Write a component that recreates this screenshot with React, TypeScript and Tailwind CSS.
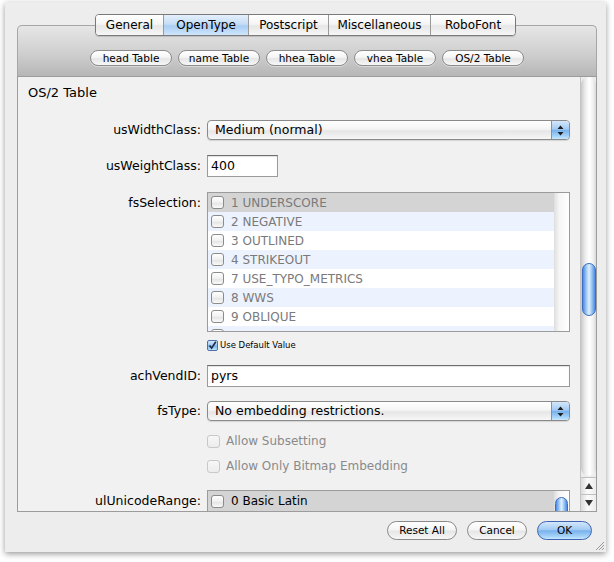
import React from "react";

const aquaBlue =
  "bg-[linear-gradient(to_bottom,#d3e7fb,#a3cbf3_45%,#78b1ec_52%,#a6d4f8_85%,#c9e8fd)]";
const aquaWhite =
  "bg-[linear-gradient(to_bottom,#ffffff,#f5f5f5_45%,#e6e6e6_55%,#f7f7f7)]";

function Arrows() {
  return (
    <svg width="7" height="11" viewBox="0 0 7 11">
      <path d="M3.5 0.5 L6.5 4 H0.5Z M0.5 7 H6.5 L3.5 10.5Z" fill="#1f1f1f" />
    </svg>
  );
}

function Popup({ value }: { value: string }) {
  return (
    <div className={`flex-1 h-[20px] flex rounded-[4px] border border-[#8a8a8a] ${aquaWhite} shadow-[0_1px_1px_rgba(0,0,0,0.12)] overflow-hidden`}>
      <div className="flex-1 pl-[7px] text-[12.5px] leading-[18px]">{value}</div>
      <div className={`w-[18px] border-l border-[#7194c9] ${aquaBlue} flex items-center justify-center`}>
        <Arrows />
      </div>
    </div>
  );
}

function Field({ value, w }: { value: string; w?: string }) {
  return (
    <div className={`${w ?? "flex-1"} h-[22px] border border-[#9a9a9a] border-t-[#6e6e6e] bg-white shadow-[inset_0_1px_1px_rgba(0,0,0,0.12)] pl-[3px] text-[12.5px] leading-[20px]`}>
      {value}
    </div>
  );
}

function Box({ disabled, checked }: { disabled?: boolean; checked?: boolean }) {
  if (checked) {
    return (
      <div className={`w-[11px] h-[11px] rounded-[2px] border border-[#4f6fa8] ${aquaBlue} flex items-center justify-center`}>
        <svg width="9" height="9" viewBox="0 0 9 9">
          <path d="M1.5 4.5 L3.6 7.2 L7.8 0.8" fill="none" stroke="#1d2b44" strokeWidth="1.6" />
        </svg>
      </div>
    );
  }
  return (
    <div
      className={`w-[13px] h-[13px] shrink-0 rounded-[3px] border ${
        disabled
          ? "border-[#c8c8c8] bg-[linear-gradient(to_bottom,#f7f7f7,#ececec)]"
          : "border-[#8b8b8b] bg-[linear-gradient(to_bottom,#ffffff,#f0f0f0_50%,#e2e2e2_51%,#fafafa)]"
      }`}
    />
  );
}

const flags = [
  "1 UNDERSCORE",
  "2 NEGATIVE",
  "3 OUTLINED",
  "4 STRIKEOUT",
  "7 USE_TYPO_METRICS",
  "8 WWS",
  "9 OBLIQUE",
  "",
];

function Row({ label, children, top }: { label: string; children: React.ReactNode; top?: boolean }) {
  return (
    <div className={`flex ${top ? "items-start" : "items-center"} gap-[6px]`}>
      <div className={`w-[173px] text-right text-[12.5px] ${top ? "pt-[2px]" : ""}`}>{label}</div>
      {children}
    </div>
  );
}

const tabs = [
  { t: "General", w: "w-[67px]" },
  { t: "OpenType", w: "w-[85px]", on: true },
  { t: "Postscript", w: "w-[80px]" },
  { t: "Miscellaneous", w: "w-[102px]" },
  { t: "RoboFont", w: "w-[85px]" },
];

const tables = ["head Table", "name Table", "hhea Table", "vhea Table", "OS/2 Table"];

export default function App() {
  return (
    <div className="w-[614px] h-[562px] bg-white pl-[5px] pt-[2px] font-['DejaVu_Sans',sans-serif] text-black">
      <div className="relative w-[601px] h-[550px] bg-[#ededed] shadow-[0_2px_6px_rgba(0,0,0,0.4)] flex flex-col">
        <div className="mx-[12px] mt-[12px] flex flex-col">
          <div className="relative z-10 -mb-[11px] flex justify-center">
            <div className="flex h-[22px] rounded-[4px] border border-[#7a7a7a] overflow-hidden shadow-[0_1px_1px_rgba(0,0,0,0.15)]">
              {tabs.map((tab, i) => (
                <div
                  key={tab.t}
                  className={`${tab.w} ${i > 0 ? "border-l border-[#9a9a9a]" : ""} ${
                    tab.on
                      ? "bg-[linear-gradient(to_bottom,#e4effc,#c6ddf6_45%,#a9cdf3_55%,#cfe6fb)]"
                      : aquaWhite
                  } text-center text-[12px] leading-[20px]`}
                >
                  {tab.t}
                </div>
              ))}
            </div>
          </div>

          <div className="w-[580px] flex flex-col">
            <div className="h-[51px] rounded-t-[5px] border border-b-0 border-[#a6a6a6] bg-[linear-gradient(to_bottom,#e6e6e6,#cfcfcf_55%,#b6b6b6)] pt-[24px] flex justify-center gap-[6px]">
              {tables.map((t) => (
                <div
                  key={t}
                  className={`w-[82px] h-[16px] rounded-full border border-[#8c8c8c] ${aquaWhite} text-center text-[10.5px] leading-[14px] shadow-[0_1px_0_rgba(255,255,255,0.4)]`}
                >
                  {t}
                </div>
              ))}
            </div>

            <div className="h-[436px] flex border border-[#9c9c9c] bg-[#f1f1f1]">
              <div className="flex-1 overflow-hidden pl-[10px] pr-[10px] flex flex-col">
                <div className="mt-[8px] text-[13px] leading-[16px]">OS/2 Table</div>
                <div className="mt-[3px] h-px bg-[#9a9a9a]" />

                <div className="mt-[16px]">
                  <Row label="usWidthClass:">
                    <Popup value="Medium (normal)" />
                  </Row>
                </div>

                <div className="mt-[15px]">
                  <Row label="usWeightClass:">
                    <Field value="400" w="w-[71px]" />
                  </Row>
                </div>

                <div className="mt-[15px]">
                  <Row label="fsSelection:" top>
                    <div className="flex-1 h-[140px] border border-[#9b9b9b] bg-white flex overflow-hidden">
                      <div className="flex-1 flex flex-col">
                        {flags.map((f, i) => (
                          <div
                            key={i}
                            className={`h-[19px] shrink-0 flex items-center gap-[7px] pl-[3px] text-[12px] text-[#7a7a7a] ${
                              i === 0 ? "bg-[#d4d4d4]" : i % 2 === 1 ? "bg-[#edf3fe]" : "bg-white"
                            }`}
                          >
                            <Box />
                            <span>{f}</span>
                          </div>
                        ))}
                      </div>
                      <div className="w-[15px] bg-[linear-gradient(to_right,#dedede,#f6f6f6_35%,#ffffff)]" />
                    </div>
                  </Row>
                </div>

                <div className="mt-[7px] h-[13px] pl-[179px] flex items-center gap-[2px]">
                  <Box checked />
                  <span className="text-[8.5px] leading-[12px]">Use Default Value</span>
                </div>

                <div className="mt-[14px]">
                  <Row label="achVendID:">
                    <Field value="pyrs" />
                  </Row>
                </div>

                <div className="mt-[14px]">
                  <Row label="fsType:">
                    <Popup value="No embedding restrictions." />
                  </Row>
                </div>

                <div className="mt-[13px] pl-[179px] flex items-center gap-[6px] h-[14px]">
                  <Box disabled />
                  <span className="text-[12px] text-[#8a8a8a]">Allow Subsetting</span>
                </div>
                <div className="mt-[11px] pl-[179px] flex items-center gap-[6px] h-[14px]">
                  <Box disabled />
                  <span className="text-[12px] text-[#8a8a8a]">Allow Only Bitmap Embedding</span>
                </div>

                <div className="mt-[17px]">
                  <Row label="ulUnicodeRange:" top>
                    <div className="flex-1 h-[40px] border border-[#9b9b9b] bg-white flex">
                      <div className="flex-1 h-[20px] bg-[#d4d4d4] flex items-center gap-[7px] pl-[3px] text-[12px]">
                        <Box />
                        <span>0 Basic Latin</span>
                      </div>
                      <div className="w-[15px] bg-[linear-gradient(to_right,#dedede,#f6f6f6_35%,#ffffff)] pt-[6px] flex justify-center">
                        <div className="w-[13px] h-[40px] rounded-full border border-[#3d6cc0] bg-[linear-gradient(to_right,#4b8ae4,#a5cdf5_30%,#e0effd_50%,#a5cdf5_70%,#4b8ae4)]" />
                      </div>
                    </div>
                  </Row>
                </div>
              </div>

              {/* vertical scroller */}
              <div className="w-[16px] border-l border-[#c4c4c4] flex flex-col bg-[#ececec]">
                <div className="flex-1 rounded-b-full rounded-t-full bg-[linear-gradient(to_right,#c9c9c9,#eeeeee_30%,#ffffff_55%,#f1f1f1_80%,#d9d9d9)] flex flex-col">
                  <div className="h-[186px]" />
                  <div className="mx-auto w-[14px] h-[53px] rounded-full border border-[#3d6cc0] bg-[linear-gradient(to_right,#4b8ae4,#a5cdf5_30%,#e0effd_50%,#a5cdf5_70%,#4b8ae4)]" />
                </div>
                <div className="h-[17px] mt-[1px] border-t border-[#c0c0c0] bg-[linear-gradient(to_right,#dcdcdc,#fbfbfb_45%,#ececec)] flex items-center justify-center">
                  <svg width="8" height="6" viewBox="0 0 8 6"><path d="M4 0 L8 6 H0Z" fill="#333" /></svg>
                </div>
                <div className="h-[17px] border-t border-[#c0c0c0] bg-[linear-gradient(to_right,#dcdcdc,#fbfbfb_45%,#ececec)] flex items-center justify-center">
                  <svg width="8" height="6" viewBox="0 0 8 6"><path d="M0 0 H8 L4 6Z" fill="#333" /></svg>
                </div>
              </div>
            </div>
          </div>
        </div>

        <div className="mt-[9px] mr-[14px] flex justify-end gap-[10px]">
          <div className={`w-[70px] h-[19px] rounded-full border border-[#8a8a8a] ${aquaWhite} text-center text-[10.5px] leading-[17px]`}>Reset All</div>
          <div className={`w-[60px] h-[19px] rounded-full border border-[#8a8a8a] ${aquaWhite} text-center text-[10.5px] leading-[17px]`}>Cancel</div>
          <div className={`w-[55px] h-[19px] rounded-full border border-[#3f63b3] ${aquaBlue} text-center text-[10.5px] leading-[17px]`}>OK</div>
        </div>

        <svg className="absolute right-[1px] bottom-[1px]" width="11" height="11" viewBox="0 0 11 11">
          <path d="M10 2 L2 10 M10 5 L5 10 M10 8 L8 10" stroke="#9a9a9a" strokeWidth="1" />
        </svg>
      </div>
    </div>
  );
}
